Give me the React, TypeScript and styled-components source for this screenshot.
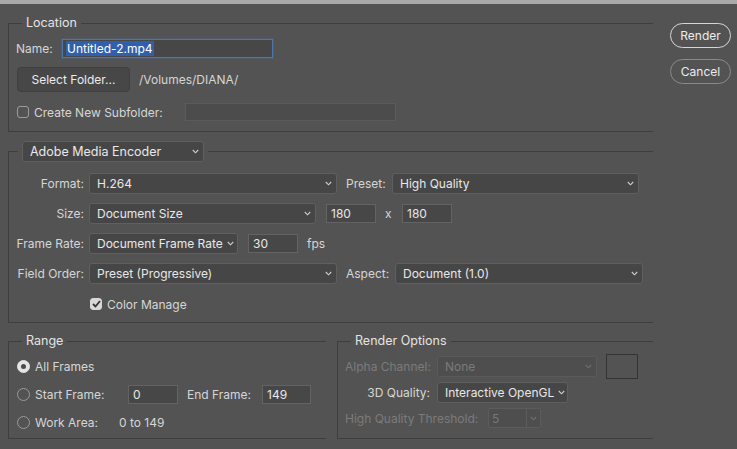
import React from "react";
import styled, { createGlobalStyle } from "styled-components";

const GlobalStyle = createGlobalStyle`
  * { box-sizing: border-box; }
  html, body { margin: 0; padding: 0; background: #535353; }
  body {
    width: 737px;
    height: 449px;
    overflow: hidden;
    font-family: Inter, "Noto Sans", "Liberation Sans", sans-serif;
    font-size: 12px;
    color: #e2e2e2;
  }
`;

const TopStrip = styled.div`
  height: 4px;
  background: #a9a9a9;
`;

const Main = styled.div`
  display: flex;
  align-items: flex-start;
  padding-left: 8px;
  gap: 17px;
`;

const LeftColumn = styled.div`
  width: 645px;
  display: flex;
  flex-direction: column;
  padding-top: 11px;
`;

const ButtonColumn = styled.div`
  display: flex;
  flex-direction: column;
  gap: 11px;
  padding-top: 19px;
`;

const PillButton = styled.button<{ $primary?: boolean }>`
  width: 61px;
  height: 25px;
  border-radius: 13px;
  border: 1px solid ${(p) => (p.$primary ? "#d6d6d6" : "#8a8a8a")};
  background: #535353;
  color: #ececec;
  font-family: inherit;
  font-size: 12px;
  padding: 0;
`;

const Group = styled.fieldset<{ $width?: number; $gapTop?: number }>`
  margin: ${(p) => p.$gapTop ?? 0}px 0 0 0;
  padding: 0;
  min-width: 0;
  border: 1px solid #3e3e3e;
  border-right: none;
  ${(p) => (p.$width ? `width: ${p.$width}px;` : "")}
`;

const Legend = styled.legend<{ $offset?: number }>`
  margin-left: ${(p) => p.$offset ?? 13}px;
  padding: 0 4px;
  font-size: 12.5px;
  line-height: 16px;
  color: #e4e4e4;
`;

const GroupBody = styled.div<{ $pad: string; $gap?: number }>`
  display: flex;
  flex-direction: column;
  padding: ${(p) => p.$pad};
  gap: ${(p) => p.$gap ?? 0}px;
`;

const Row = styled.div<{ $height?: number; $top?: number }>`
  display: flex;
  align-items: center;
  height: ${(p) => p.$height ?? 21}px;
  margin-top: ${(p) => p.$top ?? 0}px;
`;

const BottomRow = styled.div`
  display: flex;
  gap: 11px;
  margin-top: 10px;
`;

const Label = styled.span<{ $width?: number; $right?: boolean; $ml?: number; $dim?: boolean }>`
  flex: none;
  ${(p) => (p.$width ? `width: ${p.$width}px;` : "")}
  margin-left: ${(p) => p.$ml ?? 0}px;
  text-align: ${(p) => (p.$right ? "right" : "left")};
  padding-right: ${(p) => (p.$right ? 7 : 0)}px;
  color: ${(p) => (p.$dim ? "#7b7b7b" : "#d6d6d6")};
  white-space: nowrap;
`;

const RowLabel = styled.span`
  flex: none;
  width: 75px;
  text-align: right;
  color: #d6d6d6;
  white-space: nowrap;
`;

const Dropdown = styled.div<{ $width: number; $ml?: number; $disabled?: boolean }>`
  flex: none;
  display: flex;
  align-items: center;
  justify-content: space-between;
  gap: 4px;
  width: ${(p) => p.$width}px;
  height: 21px;
  margin-left: ${(p) => p.$ml ?? 0}px;
  padding: 0 4px 0 7px;
  background: ${(p) => (p.$disabled ? "#4e4e4e" : "#464646")};
  border: 1px solid ${(p) => (p.$disabled ? "#5a5a5a" : "#5f5f5f")};
  border-radius: 3px;
  color: ${(p) => (p.$disabled ? "#7a7a7a" : "#e8e8e8")};
  white-space: nowrap;
`;

const TextField = styled.div<{ $width: number; $ml?: number }>`
  flex: none;
  display: flex;
  align-items: center;
  width: ${(p) => p.$width}px;
  height: 19px;
  margin-left: ${(p) => p.$ml ?? 0}px;
  padding-left: 4px;
  background: #474747;
  border: 1px solid #636363;
  color: #e8e8e8;
`;

const NameField = styled.div`
  flex: none;
  display: flex;
  align-items: center;
  width: 211px;
  height: 19px;
  padding-left: 3px;
  background: #474747;
  border: 1px solid #4c77ab;
  box-shadow: 0 0 0 1px rgba(70, 110, 160, 0.35);
`;

const Selected = styled.span`
  background: #2f5fad;
  color: #ffffff;
  line-height: 15px;
  padding: 0 1px;
`;

const DisabledField = styled.div<{ $width: number }>`
  flex: none;
  width: ${(p) => p.$width}px;
  height: 18px;
  background: #4c4c4c;
  border: 1px solid #5b5b5b;
`;

const FolderButton = styled.button`
  flex: none;
  width: 113px;
  height: 25px;
  margin-left: 1px;
  background: #474747;
  border: 1px solid #3f3f3f;
  border-radius: 4px;
  color: #ececec;
  font-family: inherit;
  font-size: 12px;
  padding: 0;
`;

const PlainText = styled.span<{ $ml?: number }>`
  margin-left: ${(p) => p.$ml ?? 0}px;
  color: #d6d6d6;
  white-space: nowrap;
`;

const CheckWrap = styled.label<{ $width?: number; $ml?: number }>`
  flex: none;
  display: flex;
  align-items: center;
  gap: 5px;
  ${(p) => (p.$width ? `width: ${p.$width}px;` : "")}
  margin-left: ${(p) => p.$ml ?? 0}px;
  color: #d6d6d6;
  white-space: nowrap;
`;

const CheckBox = styled.span<{ $checked?: boolean }>`
  flex: none;
  display: flex;
  align-items: center;
  justify-content: center;
  width: 12px;
  height: 12px;
  border-radius: 3px;
  border: 1px solid ${(p) => (p.$checked ? "#d8d8d8" : "#9d9d9d")};
  background: ${(p) => (p.$checked ? "#d8d8d8" : "transparent")};
`;

const RadioDot = styled.span<{ $checked?: boolean }>`
  flex: none;
  display: flex;
  align-items: center;
  justify-content: center;
  width: 13px;
  height: 13px;
  border-radius: 50%;
  border: 1px solid ${(p) => (p.$checked ? "#e4e4e4" : "#9a9a9a")};
  background: ${(p) => (p.$checked ? "#e4e4e4" : "transparent")};
  &::after {
    content: "";
    display: ${(p) => (p.$checked ? "block" : "none")};
    width: 5px;
    height: 5px;
    border-radius: 50%;
    background: #4a4a4a;
  }
`;

const Swatch = styled.div`
  flex: none;
  width: 32px;
  height: 25px;
  margin-left: 9px;
  border: 1px solid #333333;
`;

const Combo = styled.div`
  flex: none;
  display: flex;
  width: 53px;
  height: 20px;
  border: 1px solid #5c5c5c;
  border-radius: 2px;
  background: #4e4e4e;
`;

const ComboValue = styled.div`
  flex: 1;
  display: flex;
  align-items: center;
  padding-left: 3px;
  color: #777777;
  border-right: 1px solid #5c5c5c;
`;

const ComboButton = styled.div`
  width: 13px;
  display: flex;
  align-items: center;
  justify-content: center;
`;

const Chevron = ({ dim }: { dim?: boolean }) => (
  <svg width="7" height="5" viewBox="0 0 7 5" style={{ flex: "none" }}>
    <polyline
      points="0.8,1 3.5,3.8 6.2,1"
      fill="none"
      stroke={dim ? "#6f6f6f" : "#cfcfcf"}
      strokeWidth="1.1"
    />
  </svg>
);

const Check = () => (
  <svg width="9" height="8" viewBox="0 0 9 8">
    <polyline points="1,4 3.5,6.5 8,1" fill="none" stroke="#333" strokeWidth="1.8" />
  </svg>
);

type DDProps = { width: number; ml?: number; disabled?: boolean; children: React.ReactNode };
const Select = ({ width, ml, disabled, children }: DDProps) => (
  <Dropdown $width={width} $ml={ml} $disabled={disabled}>
    <span>{children}</span>
    <Chevron dim={disabled} />
  </Dropdown>
);

export default function App() {
  return (
    <>
      <GlobalStyle />
      <TopStrip />
      <Main>
        <LeftColumn>
          <Group>
            <Legend>Location</Legend>
            <GroupBody $pad="8px 0 10px 7px">
              <Row $height={19}>
                <Label $width={46}>Name:</Label>
                <NameField>
                  <Selected>Untitled-2.mp4</Selected>
                </NameField>
              </Row>
              <Row $height={25} $top={9}>
                <FolderButton>Select Folder...</FolderButton>
                <PlainText $ml={9}>/Volumes/DIANA/</PlainText>
              </Row>
              <Row $height={18} $top={11}>
                <CheckWrap $width={168} $ml={1}>
                  <CheckBox />
                  Create New Subfolder:
                </CheckWrap>
                <DisabledField $width={211} />
              </Row>
            </GroupBody>
          </Group>

          <Group $gapTop={9}>
            <Legend $offset={9}>
              <Select width={182}>Adobe Media Encoder</Select>
            </Legend>
            <GroupBody $pad="11px 0 8px 0" $gap={9}>
              <Row>
                <RowLabel>Format:</RowLabel>
                <Select width={248} ml={5}>H.264</Select>
                <Label $width={46} $ml={9}>Preset:</Label>
                <Select width={247}>High Quality</Select>
              </Row>
              <Row>
                <RowLabel>Size:</RowLabel>
                <Select width={227} ml={5}>Document Size</Select>
                <TextField $width={50} $ml={10}>180</TextField>
                <Label $width={17} $ml={9}>x</Label>
                <TextField $width={50}>180</TextField>
              </Row>
              <Row>
                <RowLabel>Frame Rate:</RowLabel>
                <Select width={149} ml={5}>Document Frame Rate</Select>
                <TextField $width={50} $ml={10}>30</TextField>
                <Label $ml={9}>fps</Label>
              </Row>
              <Row>
                <RowLabel>Field Order:</RowLabel>
                <Select width={248} ml={5}>Preset (Progressive)</Select>
                <Label $width={49} $ml={9}>Aspect:</Label>
                <Select width={248}>Document (1.0)</Select>
              </Row>
              <Row $height={20} $top={1}>
                <CheckWrap $ml={81}>
                  <CheckBox $checked>
                    <Check />
                  </CheckBox>
                  Color Manage
                </CheckWrap>
              </Row>
            </GroupBody>
          </Group>

          <BottomRow>
            <Group $width={318}>
              <Legend>Range</Legend>
              <GroupBody $pad="7px 0 6px 8px" $gap={8}>
                <Row $height={20}>
                  <CheckWrap>
                    <RadioDot $checked />
                    All Frames
                  </CheckWrap>
                </Row>
                <Row $height={20}>
                  <CheckWrap $width={111}>
                    <RadioDot />
                    Start Frame:
                  </CheckWrap>
                  <TextField $width={50}>0</TextField>
                  <Label $width={75} $ml={9}>End Frame:</Label>
                  <TextField $width={49}>149</TextField>
                </Row>
                <Row $height={20}>
                  <CheckWrap $width={102}>
                    <RadioDot />
                    Work Area:
                  </CheckWrap>
                  <PlainText>0 to 149</PlainText>
                </Row>
              </GroupBody>
            </Group>

            <Group $width={316}>
              <Legend>Render Options</Legend>
              <GroupBody $pad="5px 0 9px 7px">
                <Row $height={25}>
                  <Label $width={92} $right $dim>Alpha Channel:</Label>
                  <Select width={160} disabled>None</Select>
                  <Swatch />
                </Row>
                <Row $height={21} $top={3}>
                  <Label $width={92} $right>3D Quality:</Label>
                  <Select width={131}>Interactive OpenGL</Select>
                </Row>
                <Row $height={20} $top={5}>
                  <Label $width={143} $dim>High Quality Threshold:</Label>
                  <Combo>
                    <ComboValue>5</ComboValue>
                    <ComboButton>
                      <Chevron dim />
                    </ComboButton>
                  </Combo>
                </Row>
              </GroupBody>
            </Group>
          </BottomRow>
        </LeftColumn>

        <ButtonColumn>
          <PillButton $primary>Render</PillButton>
          <PillButton>Cancel</PillButton>
        </ButtonColumn>
      </Main>
    </>
  );
}
